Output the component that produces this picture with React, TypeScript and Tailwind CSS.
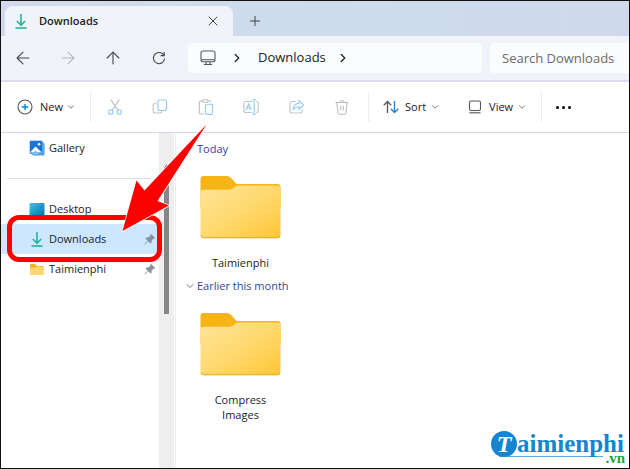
import { useState } from "react";
import type { ReactNode } from "react";
import { ArrowLeft, ArrowRight, ArrowUp, ChevronDown, ChevronRight, Plus, X } from "lucide-react";

function DownloadIcon({ className }: { className: string }) {
  return (
    <svg viewBox="0 0 12 15" fill="none" stroke="#1fae94" strokeWidth="1.5" className={className} aria-hidden="true">
      <path d="M6 0v11M1.800 7l4.200 4.200L10.200 7M.5 14h11" />
    </svg>
  );
}

function RefreshIcon() {
  return (
    <svg viewBox="0 0 14 14" fill="none" stroke="currentColor" strokeWidth="1.1" className="h-3.5 w-3.5" aria-hidden="true">
      <path d="M12.600 7.500A5.600 5.600 0 1 1 11.500 3.700M12.200 1v3.600H8.600" />
    </svg>
  );
}

function MonitorIcon() {
  return (
    <svg viewBox="0 0 16 16" fill="none" stroke="#555" strokeWidth="1.100" className="h-4 w-4" aria-hidden="true">
      <rect x="1" y="1" width="14" height="10.800" rx="2" />
      <path d="M1.500 9.800h13M6 12v2.500M10 12v2.500M4 14.500h8" />
    </svg>
  );
}

function PinIcon() {
  return (
    <svg viewBox="0 0 12 12" className="h-3 w-3" fill="#87929c" aria-hidden="true">
      <path d="M7 .8 11.200 5l-.8.700-.8-.1-2.100 2.100.1 2-.9.900-2.500-2.400L1 11.400l-.5-.5L3.700 7.700 1.400 5.400l.9-.9 2 .1 2.200-2.100-.2-.9z" />
    </svg>
  );
}

function GalleryIcon() {
  return (
    <svg viewBox="0 0 16 16" className="h-4 w-4" aria-hidden="true">
      <rect x="3" y="2.500" width="12.500" height="13" rx="1.500" fill="#3f97dc" />
      <rect x=".5" y=".5" width="13.300" height="13.500" rx="1.500" fill="#1976d2" stroke="#fff" strokeWidth=".4" />
      <path d="M1 12.500 6.500 6.500l6.300 6z" fill="#fff" />
      <path d="M3 14 6.500 10.500l4 3.500z" fill="#7cc0f2" />
      <circle cx="10" cy="4.200" r="1.300" fill="#fff" />
    </svg>
  );
}

function DesktopIcon() {
  return (
    <svg viewBox="0 0 16 13" className="h-[13px] w-4" aria-hidden="true">
      <defs>
        <linearGradient id="desk" x1="0" y1="0" x2="1" y2="1">
          <stop offset="0" stopColor="#33cbe0" />
          <stop offset="1" stopColor="#1464b8" />
        </linearGradient>
      </defs>
      <rect x=".5" width="15" height="13" rx="1" fill="url(#desk)" />
    </svg>
  );
}

function SmallFolderIcon() {
  return (
    <svg viewBox="0 0 16 13" className="h-[13px] w-4" aria-hidden="true">
      <path d="M1 2a1 1 0 0 1 1-1h4l2 2h5.500a1 1 0 0 1 1 1v7a1 1 0 0 1-1 1H2a1 1 0 0 1-1-1z" fill="#f0b02c" />
      <path d="M1 4.500h5.500L8 3.800h6.500V11a1 1 0 0 1-1 1H2a1 1 0 0 1-1-1z" fill="#ffd671" />
    </svg>
  );
}

function FolderIcon() {
  return (
    <svg viewBox="0 0 81 64" className="h-16 w-[81px]" aria-hidden="true">
      <defs>
        <linearGradient id="front" x1="0" y1="0" x2="1" y2="1">
          <stop offset="0" stopColor="#ffe49a" />
          <stop offset=".5" stopColor="#ffd96f" />
          <stop offset="1" stopColor="#ffc636" />
        </linearGradient>
      </defs>
      <path d="M.5 4a3 3 0 0 1 3-3h22c3 0 4 .5 6 2.300l5 5.700h41a3 3 0 0 1 3 3v20H.5z" fill="#f7b417" />
      <path d="M.5 17.800a3 3 0 0 1 3-3h24c3 0 4.500-.5 6.500-2l3-2.300h40.500a3 3 0 0 1 3 3V60a3 3 0 0 1-3 3h-74a3 3 0 0 1-3-3z" fill="url(#front)" />
      <path d="M1 60.500q.5 2.300 2.500 2.300h74q2 0 2.500-2.300" fill="none" stroke="#e0a52c" strokeWidth="1" />
    </svg>
  );
}

const fileActions: { label: string; icon: ReactNode }[] = [
  {
    label: "Cut",
    icon: (
      <>
        <path d="M3.800.5l6.800 10.600M12.200.5 5.400 11.100" stroke="#bdbdbd" />
        <circle cx="3.700" cy="13" r="2.300" stroke="#8ecbf6" />
        <circle cx="12.300" cy="13" r="2.300" stroke="#8ecbf6" />
      </>
    ),
  },
  {
    label: "Copy",
    icon: (
      <>
        <path d="M4.500 4.500H3.200a2 2 0 0 0-2 2V12a2 2 0 0 0 2 2h4.600a2 2 0 0 0 2-1.600" stroke="#c4c4c4" />
        <rect x="6" y="1" width="8.500" height="10.500" rx="2" stroke="#8ecbf6" />
      </>
    ),
  },
  {
    label: "Paste",
    icon: (
      <>
        <path d="M4 2H2.800a1.500 1.500 0 0 0-1.500 1.500v10a1.500 1.500 0 0 0 1.500 1.500H6M10 2h1.500A1.500 1.500 0 0 1 13 3.500" stroke="#bdbdbd" />
        <rect x="4.300" y=".7" width="5.700" height="2.600" rx="1" stroke="#bdbdbd" />
        <rect x="7.500" y="5.200" width="7" height="10.200" rx="1.500" stroke="#8ecbf6" />
      </>
    ),
  },
  {
    label: "Rename",
    icon: (
      <>
        <path d="M9.300 2.500H2.800a2 2 0 0 0-2 2v7a2 2 0 0 0 2 2h6.500M13.200 2.500a2 2 0 0 1 2 2v7a2 2 0 0 1-2 2" stroke="#c4c4c4" />
        <path d="M3.200 11 5.700 5l2.500 6M4 9h3.400M11.200.8v14.400M9.300.8h3.800M9.300 15.200h3.800" stroke="#8ecbf6" />
      </>
    ),
  },
  {
    label: "Share",
    icon: (
      <>
        <path d="M6.500 2.500H3a2 2 0 0 0-2 2V12a2 2 0 0 0 2 2h8a2 2 0 0 0 2-2v-1.500" stroke="#c4c4c4" />
        <path d="M10 1.800 14.800 6 10 10.200V7.800c-3 0-4.500 1-6 2.700.3-3.500 2.300-6 6-6.300z" stroke="#8ecbf6" />
      </>
    ),
  },
  {
    label: "Delete",
    icon: (
      <path
        d="M1.500 3.500h13M2.800 3.500l1.200 10a2 2 0 0 0 2 1.700h4a2 2 0 0 0 2-1.700l1.200-10M6 3.500a2 2 0 0 1 4 0M6.700 6.800v4.500M9.300 6.800v4.500"
        stroke="#bdbdbd"
      />
    ),
  },
];

const places = [
  { name: "Desktop", icon: <DesktopIcon />, pinned: false },
  { name: "Downloads", icon: <DownloadIcon className="mx-auto h-[15px] w-3" />, pinned: true },
  { name: "Taimienphi", icon: <SmallFolderIcon />, pinned: true },
];

function TabBar() {
  return (
    <div className="flex h-[35px] items-end bg-linear-to-r from-[#d3d9ec] via-[#cddcec] to-[#cfd9eb] pl-1">
      <div className="flex h-[30px] w-[228px] items-center rounded-t-lg bg-[#f0f4f9] pr-2.5 pl-2.5">
        <DownloadIcon className="h-[15px] w-3" />
        <span className="ml-3 flex-1 text-[11px] font-semibold">Downloads</span>
        <button type="button" aria-label="Close tab" className="p-0.5 text-[#444]">
          <X className="h-4 w-4" strokeWidth={1.5} />
        </button>
      </div>
      <button type="button" aria-label="New tab" className="ml-3.5 flex h-[30px] items-center text-[#444]">
        <Plus className="h-4 w-4" strokeWidth={1.5} />
      </button>
    </div>
  );
}

function AddressRow() {
  const [query, setQuery] = useState("");

  return (
    <div className="flex h-[46px] items-center border-b-2 border-[#dcdcee] bg-linear-to-r from-[#f0f3f9] to-[#f2f3fa] pl-3">
      <nav aria-label="History" className="flex w-[175px] shrink-0 items-center gap-[25px] text-[#444]">
        <button type="button" aria-label="Back">
          <ArrowLeft className="h-5 w-5" strokeWidth={1.300} />
        </button>
        <button type="button" aria-label="Forward" className="text-[#b4b6bb]">
          <ArrowRight className="h-5 w-5" strokeWidth={1.300} />
        </button>
        <button type="button" aria-label="Up">
          <ArrowUp className="h-5 w-5" strokeWidth={1.300} />
        </button>
        <button type="button" aria-label="Refresh" className="p-1">
          <RefreshIcon />
        </button>
      </nav>
      <div className="flex h-[30px] flex-1 items-center rounded bg-[#fbfcfe] pl-3 text-[13px]">
        <MonitorIcon />
        <ChevronRight className="ml-3.5 h-3.5 w-3.5" strokeWidth={2.2} />
        <a href="#downloads" className="ml-3.5">
          Downloads
        </a>
        <ChevronRight className="ml-2.5 h-3.5 w-3.5" strokeWidth={2.2} />
      </div>
      <input
        type="search"
        aria-label="Search Downloads"
        placeholder="Search Downloads"
        value={query}
        onChange={(e) => setQuery(e.target.value)}
        className="ml-2 h-[30px] w-[139px] rounded-l bg-[#fbfcfe] pl-3 text-[13px] outline-none placeholder:text-[#6a6a6a]"
      />
    </div>
  );
}

function Toolbar() {
  return (
    <div className="flex h-[51px] items-center border-b border-[#d5d6e6] text-[11px]">
      <button type="button" className="flex w-[89px] items-center pl-4">
        <svg viewBox="0 0 16 16" fill="none" strokeWidth="1.100" className="h-4 w-4" aria-hidden="true">
          <circle cx="8" cy="8" r="7" stroke="#555" />
          <path d="M8 4.700v6.600M4.700 8h6.600" stroke="#0f84dc" strokeWidth="1.400" />
        </svg>
        <span className="ml-[7px]">New</span>
        <ChevronDown className="ml-[3px] h-2.5 w-2.5 text-[#777]" strokeWidth={2.4} />
      </button>
      <div className="h-[30px] w-px bg-[#ededed]" />
      <div className="flex w-[277px] justify-between pr-[18px] pl-4">
        {fileActions.map((a) => (
          <button key={a.label} type="button" aria-label={a.label} disabled>
            <svg viewBox="0 0 16 16" fill="none" strokeWidth="1.100" className="h-4 w-4" aria-hidden="true">
              {a.icon}
            </svg>
          </button>
        ))}
      </div>
      <div className="h-[30px] w-px bg-[#ededed]" />
      <button type="button" className="ml-3.5 flex items-center">
        <svg viewBox="0 0 16 14" fill="none" strokeWidth="1.300" className="h-3.5 w-4" aria-hidden="true">
          <path d="M4.500 13V1.500M.8 5.200 4.500 1.500l3.700 3.700" stroke="#555" />
          <path d="M11.500 1v11.500M7.800 8.800l3.700 3.700 3.700-3.700" stroke="#1f7fd0" />
        </svg>
        <span className="ml-1.5">Sort</span>
        <ChevronDown className="ml-1 h-2.5 w-2.5 text-[#777]" strokeWidth={2.4} />
      </button>
      <button type="button" className="ml-7 flex items-center">
        <svg viewBox="0 0 14 14" fill="none" stroke="#555" strokeWidth="1.100" className="h-3.5 w-3.5" aria-hidden="true">
          <rect x="1.500" y="1" width="11" height="9.500" rx="1.500" />
          <path d="M1.500 12.800h11" />
        </svg>
        <span className="ml-[7px]">View</span>
        <ChevronDown className="ml-1 h-2.5 w-2.5 text-[#777]" strokeWidth={2.4} />
      </button>
      <div className="ml-3.5 h-[30px] w-px bg-[#ededed]" />
      <button type="button" aria-label="See more" className="ml-3.5 flex gap-[3px]">
        <span className="h-[3px] w-[3px] rounded-full bg-black" />
        <span className="h-[3px] w-[3px] rounded-full bg-black" />
        <span className="h-[3px] w-[3px] rounded-full bg-black" />
      </button>
    </div>
  );
}

function Sidebar() {
  const [selected, setSelected] = useState("Downloads");

  return (
    <aside className="relative flex shrink-0 text-[11px]">
      <nav aria-label="Places" className="w-[158px]">
        <button type="button" className="flex h-[30px] w-full items-center gap-1 pl-7">
          <GalleryIcon />
          Gallery
        </button>
        <div className="flex h-[31px] items-center pr-2 pl-1.5">
          <hr className="w-full border-[#dedede]" />
        </div>
        {places.map((p) => (
          <button
            key={p.name}
            type="button"
            onClick={() => setSelected(p.name)}
            className={`flex h-[30px] w-full items-center gap-1 pr-[3px] pl-7 text-left ${
              selected === p.name ? "bg-[#cce7ff]" : ""
            }`}
          >
            <span className="w-4">{p.icon}</span>
            <span className="flex-1">{p.name}</span>
            {p.pinned && <PinIcon />}
          </button>
        ))}
      </nav>
      <div className="w-[15px] bg-[#eeeeee] pt-[31px]">
        <svg viewBox="0 0 5 4" className="mx-auto h-1 w-[5px]" fill="#868686" aria-hidden="true">
          <path d="M2.500 0 5 4H0z" />
        </svg>
        <div className="mx-auto mt-4 h-[130px] w-[5px] bg-[#868686]" />
      </div>
      <div className="w-0.5 border-r border-[#ececec]" />

      {/* callout frame and arrow over the selected row */}
      <div className="pointer-events-none absolute top-[82px] left-1.5 h-[47px] w-[155px] rounded-xl border-[5px] border-[#fe0000]" />
      <svg viewBox="120 122 88 112" className="pointer-events-none absolute -top-2.5 left-[119px] h-28 w-[88px]" aria-hidden="true">
        <path d="M206.500 123.500 144.500 189.500 136.500 179.500 122.500 230 169 204.500 157.500 200z" fill="#fe0000" stroke="#fff" strokeWidth="1.500" paintOrder="stroke" />
      </svg>
    </aside>
  );
}

function FolderTile({ name }: { name: string }) {
  return (
    <a href="#folder" className="flex w-[81px] flex-col items-center gap-4 text-center text-[11px] leading-[15px]">
      <FolderIcon />
      <span className="px-2">{name}</span>
    </a>
  );
}

function Files() {
  return (
    <main className="flex-1 pt-2 pl-2">
      <section>
        <h2 className="pl-[13px] text-[11px] leading-4 text-[#33459c]">Today</h2>
        <div className="mt-[18px] pl-4">
          <FolderTile name="Taimienphi" />
        </div>
      </section>
      <section className="mt-2">
        <h2 className="flex items-center text-[11px] leading-4 text-[#33459c]">
          <ChevronDown className="mr-px h-3 w-3 text-[#777]" strokeWidth={2} />
          Earlier this month
        </h2>
        <div className="mt-[18px] pl-4">
          <FolderTile name="Compress Images" />
        </div>
      </section>
    </main>
  );
}

function Watermark() {
  return (
    <div className="absolute right-1 bottom-1 w-[134px] font-['Liberation_Serif',serif] font-bold text-[#1685d0]">
      <div className="flex items-center">
        <span className="flex h-[26px] w-[26px] items-center justify-center rounded-full bg-[#1685d0] text-[24px] leading-6 text-white italic">
          T
        </span>
        <span className="text-[25px] leading-[26px]">aimienphi</span>
      </div>
      <div className="-mt-px ml-2 w-[104px] border-t border-[#5cabe0]" />
      <div className="-mt-1 text-right text-[15px] leading-[11px] text-[#17a63c]">.vn</div>
    </div>
  );
}

export default function App() {
  return (
    <div className="relative flex min-h-screen flex-col border border-[#111] bg-white font-['Open_Sans','Noto_Sans',sans-serif] text-[#222]">
      <TabBar />
      <AddressRow />
      <Toolbar />
      <div className="flex flex-1">
        <Sidebar />
        <Files />
      </div>
      <Watermark />
    </div>
  );
}
